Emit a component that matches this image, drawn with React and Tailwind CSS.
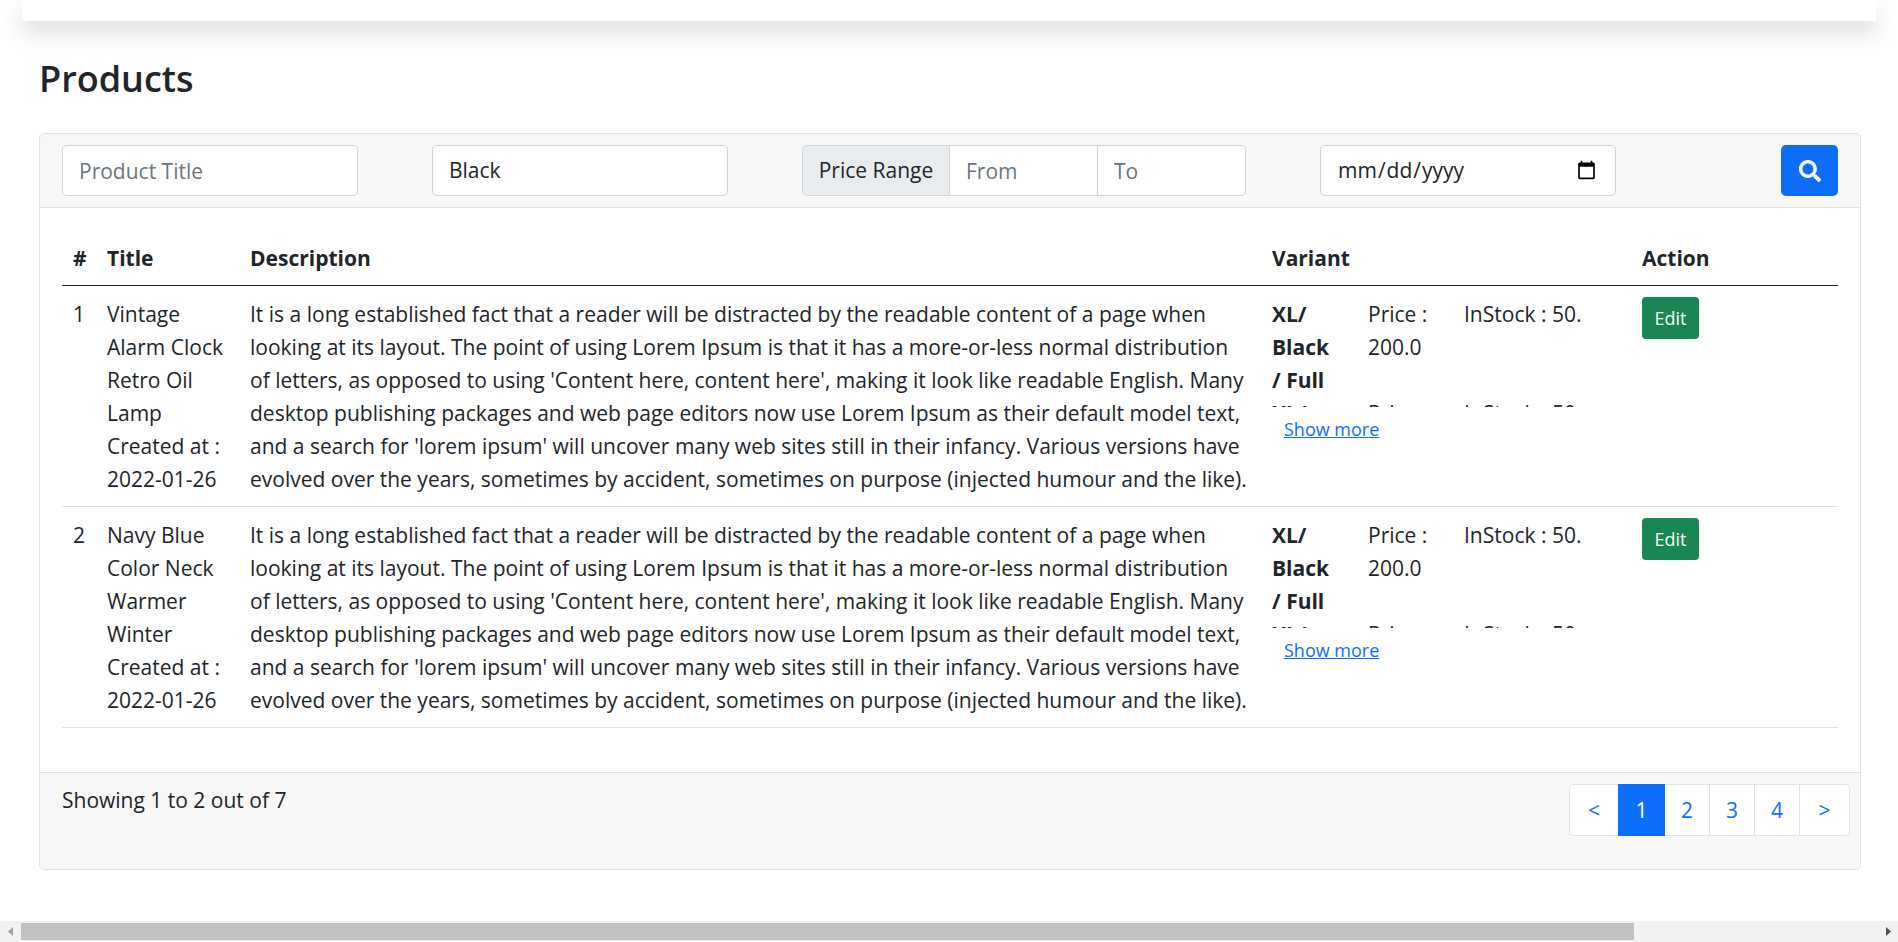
import { FaSearch } from "react-icons/fa";

const description =
  "It is a long established fact that a reader will be distracted by the readable content of a page when looking at its layout. The point of using Lorem Ipsum is that it has a more-or-less normal distribution of letters, as opposed to using 'Content here, content here', making it look like readable English. Many desktop publishing packages and web page editors now use Lorem Ipsum as their default model text, and a search for 'lorem ipsum' will uncover many web sites still in their infancy. Various versions have evolved over the years, sometimes by accident, sometimes on purpose (injected humour and the like).";

const variant = { name: "XL/ Black / Full", price: "200.0", stock: "50." };

const products = [
  { id: 1, title: "Vintage Alarm Clock Retro Oil Lamp", created: "2022-01-26", variants: [variant, variant] },
  { id: 2, title: "Navy Blue Color Neck Warmer Winter", created: "2022-01-26", variants: [variant, variant] },
];

const field =
  "h-[51px] w-full min-w-0 border border-[#ced4da] bg-white px-4 text-[#212529] placeholder:text-[#6c757d] placeholder:opacity-100";

const textCell = "px-[11px] pt-3 pb-[10px]";

function Filters() {
  return (
    <form className="flex justify-between border-b border-[#dfdfdf] bg-[#f7f7f7] px-[22px] py-[11px]">
      <div className="w-2/12">
        <input type="text" aria-label="Product Title" placeholder="Product Title" className={`${field} rounded-[5px]`} />
      </div>
      <div className="w-2/12">
        <select aria-label="Variant" defaultValue="Black" className={`${field} appearance-none rounded-[5px]`}>
          <option>Black</option>
        </select>
      </div>
      <div className="flex w-3/12">
        <span className="flex h-[51px] w-1/3 shrink-0 items-center justify-center rounded-l-[5px] border border-[#ced4da] bg-[#e9ecef] whitespace-nowrap">
          Price Range
        </span>
        <input type="text" aria-label="Price from" placeholder="From" className={`${field} -ml-px flex-1`} />
        <input type="text" aria-label="Price to" placeholder="To" className={`${field} -ml-px flex-1 rounded-r-[5px]`} />
      </div>
      <div className="w-2/12">
        <input type="date" aria-label="Date" className={`${field} rounded-[5px]`} />
      </div>
      <div className="flex w-1/12 justify-end">
        <button type="submit" aria-label="Search" className="flex h-[51px] w-[57px] items-center justify-center rounded-[5px] bg-[#0d6efd] text-white">
          <FaSearch size={22} />
        </button>
      </div>
    </form>
  );
}

function Variants({ items }) {
  return (
    <>
      <div className="h-[109px] overflow-hidden">
        {items.map((item, i) => (
          <dl key={i} className="flex">
            <dt className="w-24 shrink-0 pr-8 font-bold">{item.name}</dt>
            <dd className="w-24 shrink-0 pr-8">Price : {item.price}</dd>
            <dd className="whitespace-nowrap">InStock : {item.stock}</dd>
          </dl>
        ))}
      </div>
      <button type="button" className="px-3 py-[7px] text-[18px] leading-[30px] text-[#0d6efd] underline">
        Show more
      </button>
    </>
  );
}

function ProductTable() {
  return (
    <table className="mb-[22px] w-full table-fixed border-collapse text-left align-top">
      <colgroup>
        <col className="w-[34px]" />
        <col className="w-[143px]" />
        <col />
        <col className="w-[370px]" />
        <col className="w-[207px]" />
      </colgroup>
      <thead>
        <tr className="border-b border-[#212529]">
          {["#", "Title", "Description", "Variant", "Action"].map((h) => (
            <th key={h} scope="col" className={`${textCell} font-bold`}>
              {h}
            </th>
          ))}
        </tr>
      </thead>
      <tbody>
        {products.map((p) => (
          <tr key={p.id} className="border-b border-[#dee2e6] align-top">
            <td className={textCell}>{p.id}</td>
            <td className={textCell}>
              {p.title}
              <br />
              Created at : {p.created}
            </td>
            <td className={textCell}>{description}</td>
            <td className={textCell}>
              <Variants items={p.variants} />
            </td>
            <td className="p-[11px]">
              <a href="#edit" className="block h-[42px] w-[57px] rounded-[4px] bg-[#198754] text-center text-[18px] leading-[43px] text-white">
                Edit
              </a>
            </td>
          </tr>
        ))}
      </tbody>
    </table>
  );
}

function Pagination() {
  const cell = "flex h-[52px] items-center justify-center border-y border-[#dee2e6] bg-white";
  return (
    <nav aria-label="Pages" className="mb-[22px] flex text-[#0d6efd]">
      <a href="#prev" className={`${cell} w-[49px] rounded-l-[5px] border-l`}>&lt;</a>
      <a href="#1" aria-current="page" className="flex h-[52px] w-[47px] items-center justify-center bg-[#0d6efd] text-white">1</a>
      {[2, 3, 4].map((n) => (
        <a key={n} href={`#${n}`} className={`${cell} w-[45px] border-r`}>{n}</a>
      ))}
      <a href="#next" className={`${cell} w-[50px] rounded-r-[5px] border-r`}>&gt;</a>
    </nav>
  );
}

function HorizontalScrollbar() {
  return (
    <div aria-hidden="true" className="mt-auto flex h-[21px] items-center bg-[#f1f1f1]">
      <svg width="21" height="21" viewBox="0 0 21 21" className="shrink-0">
        <path d="M13 6v9l-5-4.500z" fill="#a3a3a3" />
      </svg>
      <div className="flex-1">
        <div className="h-[17px] w-[86.9%] bg-[#c1c1c1]" />
      </div>
      <svg width="21" height="21" viewBox="0 0 21 21" className="shrink-0">
        <path d="M9 6v9l5-4.500z" fill="#505050" />
      </svg>
    </div>
  );
}

export default function App() {
  return (
    <div className="flex min-h-screen flex-col overflow-x-hidden bg-white font-['Open_Sans','Noto_Sans',sans-serif] text-[21px] leading-[33px] text-[#212529]">
      <div className="mx-[22px] h-[21px] bg-white shadow-[0_11px_22px_rgba(0,0,0,0.15)]" />
      <main className="pr-[37px] pl-[39px]">
        <h1 className="mt-[35px] mb-[31px] text-[36px] leading-[46px] font-semibold">Products</h1>
        <section className="overflow-hidden rounded-[5px] border border-[#dfdfdf]">
          <Filters />
          <div className="p-[22px]">
            <ProductTable />
          </div>
          <footer className="flex items-start justify-between border-t border-[#dfdfdf] bg-[#f7f7f7] py-[11px] pr-[10px] pl-[22px]">
            <p>Showing 1 to 2 out of 7</p>
            <Pagination />
          </footer>
        </section>
      </main>
      <HorizontalScrollbar />
    </div>
  );
}
